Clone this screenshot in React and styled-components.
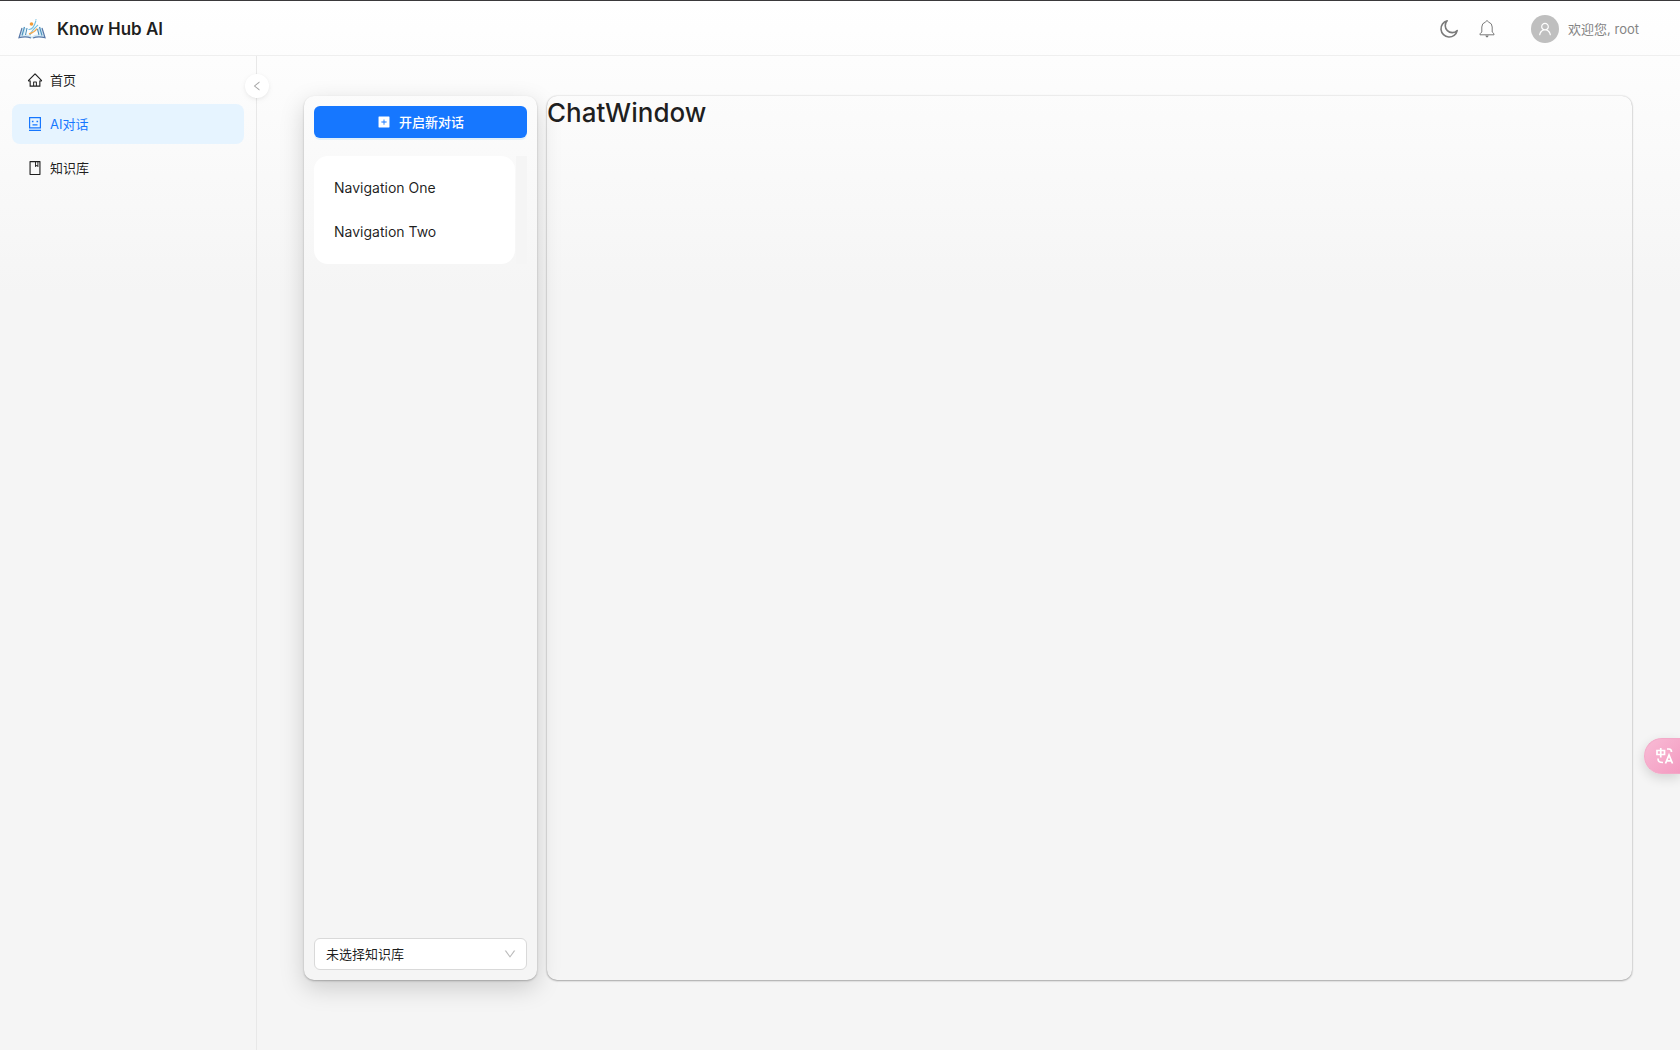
import React from "react";
import styled, { createGlobalStyle } from "styled-components";
import {
  AiOutlineHome,
  AiOutlineBook,
  AiOutlineUser,
  AiOutlineLeft,
  AiOutlineDown,
  AiFillPlusSquare,
} from "react-icons/ai";

const GlobalStyle = createGlobalStyle`
  *, *::before, *::after { box-sizing: border-box; }
  body {
    margin: 0;
    color: rgba(0, 0, 0, 0.88);
    font-family: Inter, "Noto Sans CJK SC", sans-serif;
    font-size: 13px;
    line-height: 22px;
  }
  button, select { font: inherit; color: inherit; }
`;

const Page = styled.div`
  display: flex;
  flex-direction: column;
  min-height: 100vh;
  background: linear-gradient(#ffffff, #f5f5f5 28%);
`;

const Header = styled.header`
  display: flex;
  align-items: center;
  justify-content: space-between;
  height: 56px;
  padding: 1px 41px 0 18px;
  border-top: 1px solid #3a393b;
  border-bottom: 1px solid #efefef;
`;

const Brand = styled.a`
  display: flex;
  align-items: center;
  gap: 11px;
  color: inherit;
  text-decoration: none;
`;

const BrandName = styled.h1`
  margin: 0;
  font-size: 17px;
  line-height: 32px;
  font-weight: 600;
`;

const Actions = styled.div`
  display: flex;
  align-items: center;
  gap: 18px;
`;

const IconButton = styled.button`
  display: flex;
  padding: 0;
  border: 0;
  background: none;
  color: #7a7a7a;
  cursor: pointer;
`;

const UserButton = styled(IconButton)`
  align-items: center;
  gap: 9px;
  margin-left: 16px;
  color: #848484;
`;

const Avatar = styled.span`
  display: flex;
  align-items: center;
  justify-content: center;
  width: 28px;
  height: 28px;
  border-radius: 50%;
  background: #bfbfbf;
  color: #ffffff;
`;

const Body = styled.div`
  display: flex;
  flex: 1;
`;

const Sider = styled.aside`
  position: relative;
  flex: 0 0 257px;
  padding: 4px 12px;
  border-right: 1px solid #e8e8e8;
`;

const Menu = styled.nav`
  display: flex;
  flex-direction: column;
  gap: 4px;
`;

const MenuLink = styled.a`
  display: flex;
  align-items: center;
  gap: 7px;
  height: 40px;
  padding: 0 15px;
  border-radius: 8px;
  background: ${(p) => (p.$active ? "#e6f4ff" : "transparent")};
  color: ${(p) => (p.$active ? "#1677ff" : "rgba(0, 0, 0, 0.88)")};
  text-decoration: none;
`;

const CollapseButton = styled.button`
  position: absolute;
  top: 18px;
  right: -13px;
  display: flex;
  align-items: center;
  justify-content: center;
  width: 24px;
  height: 24px;
  padding: 0;
  border: 0;
  border-radius: 50%;
  background: #ffffff;
  color: #a5a5a5;
  box-shadow: 0 2px 8px -2px rgba(0, 0, 0, 0.08), 0 1px 4px -1px rgba(25, 15, 15, 0.08);
  cursor: pointer;
`;

const Content = styled.main`
  display: flex;
  flex: 1;
  gap: 10px;
  padding: 40px 48px 70px 47px;
`;

const ChatSidebar = styled.section`
  display: flex;
  flex-direction: column;
  flex: 0 0 233px;
  padding: 10px;
  border-radius: 10px;
  box-shadow: 0 1px 2px rgba(0, 0, 0, 0.26), 0 8px 24px rgba(0, 0, 0, 0.17);
`;

const NewChatButton = styled.button`
  display: flex;
  align-items: center;
  justify-content: center;
  gap: 8px;
  height: 32px;
  padding: 0 16px;
  border: 0;
  border-radius: 6px;
  background: #1677ff;
  color: #ffffff;
  font-weight: 500;
  box-shadow: 0 2px 0 rgba(5, 145, 255, 0.1);
  cursor: pointer;
`;

const ChatListScroll = styled.div`
  margin-top: 18px;
  padding-right: 12px;
  background: linear-gradient(#f5f5f5, #f5f5f5) right / 11px 100% no-repeat;
`;

const ChatList = styled.ul`
  display: flex;
  flex-direction: column;
  gap: 4px;
  margin: 0;
  padding: 12px 4px;
  border-radius: 14px;
  background: #ffffff;
  font-size: 14px;
  list-style: none;
`;

const ChatLink = styled.a`
  display: block;
  padding: 0 16px;
  line-height: 40px;
  color: inherit;
  text-decoration: none;
`;

const SelectBox = styled.label`
  display: grid;
  align-items: center;
  margin-top: auto;
  color: #bcbcbc;

  > * {
    grid-area: 1 / 1;
  }

  > svg {
    justify-self: end;
    margin-right: 10px;
    pointer-events: none;
  }
`;

const Select = styled.select`
  width: 100%;
  height: 32px;
  padding: 0 32px 0 11px;
  border: 1px solid #d9d9d9;
  border-radius: 6px;
  background: #ffffff;
  color: rgba(0, 0, 0, 0.88);
  appearance: none;
`;

const ChatWindow = styled.section`
  flex: 1;
  border-radius: 10px;
  box-shadow: 0 1px 2px rgba(0, 0, 0, 0.28), 0 0 2px rgba(0, 0, 0, 0.2);
`;

const ChatTitle = styled.h2`
  margin: 0;
  font-size: 26px;
  line-height: 34px;
  font-weight: 500;
`;

const TranslateButton = styled.button`
  position: fixed;
  right: 0;
  top: 738px;
  display: flex;
  align-items: center;
  width: 36px;
  height: 36px;
  padding: 0 0 0 11px;
  border: 1px solid #f3a9c8;
  border-right: 0;
  border-radius: 18px 0 0 18px;
  background: linear-gradient(135deg, #f8bbd5, #f49bc1);
  color: #ffffff;
  box-shadow: 0 4px 12px rgba(0, 0, 0, 0.14);
  cursor: pointer;
`;

const Logo = () => (
  <svg width="28" height="22" viewBox="0 0 28 22" fill="none" aria-hidden="true">
    <path d="M5 9L1 20C6 18.500 10 19 14 20.500C18 19 22 18.500 27 20L23 9L20 10L22 17C18 16 16 17 14 18.500C12 17 10 16 6 17L8 10Z" fill="#d5eaf5" />
    <path d="M4 10L1 19.700C6 18.500 10 18.800 13 20M24 10L27 19.700C22 18.500 18 18.800 15 20" stroke="#5878a8" strokeWidth="1.200" />
    <path d="M6.500 9L4 17.500M9 10L7.500 17M21.500 9L24 17.500M19.500 11L21 17" stroke="#4c91bd" strokeWidth="1.100" />
    <path d="M10.500 11.500C14 12 16.500 8 18 2.500M12 17C14 12 18 9 20 7" stroke="#74c0e0" strokeWidth="1.100" />
    <path d="M11 16C14 15 17 14 19 10.500" stroke="#f2aa50" strokeWidth="1.500" />
    <circle cx="13.500" cy="6" r="1.800" fill="#f29c38" />
    <circle cx="18" cy="1.500" r="0.600" fill="#74c0e0" />
  </svg>
);

const MoonIcon = () => (
  <svg width="20" height="20" viewBox="0 0 20 20" fill="none" stroke="currentColor" strokeWidth="1.600" strokeLinejoin="round" aria-hidden="true">
    <path d="M8.200 1.800A8.200 8.200 0 1 0 18.200 11.500A6.800 6.800 0 0 1 8.200 1.800Z" />
  </svg>
);

const BellIcon = () => (
  <svg width="20" height="20" viewBox="0 0 20 20" fill="none" stroke="currentColor" strokeLinejoin="round" aria-hidden="true">
    <path d="M3 15.800V14.800L4.800 13V8A5.200 5.200 0 0 1 8.300 3.100L10 1.500L11.700 3.100A5.200 5.200 0 0 1 15.200 8V13L17 14.800V15.800Z" />
    <path d="M8.300 16.500H11.700L10.800 18.200H9.200Z" fill="currentColor" stroke="none" />
  </svg>
);

const FaceIcon = () => (
  <svg width="16" height="16" viewBox="0 0 16 16" fill="none" stroke="currentColor" strokeWidth="1.200" aria-hidden="true">
    <path d="M2.600 1.600H13.400V11.900H2.600ZM5.500 8.800H10.500M2 14.400H14" />
    <path d="M4.900 5.500H6.500M9.500 5.500H11.100" strokeWidth="1.500" />
  </svg>
);

const TranslateIcon = () => (
  <svg width="18" height="18" viewBox="0 0 18 18" fill="none" stroke="currentColor" strokeWidth="1.700" aria-hidden="true">
    <path d="M1 3.500H8.500V7.500H1ZM4.750 1V10.500" />
    <path d="M11 2H13C15 2 15.500 3 15.500 5M2 11.500C2 14.500 3 15.500 7 15.500" />
    <path d="M9.500 16.500L13 8L16.500 16.500M10.700 13.800H15.300" />
  </svg>
);

export default function App() {
  return (
    <>
      <GlobalStyle />
      <Page>
        <Header>
          <Brand href="#">
            <Logo />
            <BrandName>Know Hub AI</BrandName>
          </Brand>
          <Actions>
            <IconButton type="button" aria-label="切换主题">
              <MoonIcon />
            </IconButton>
            <IconButton type="button" aria-label="通知">
              <BellIcon />
            </IconButton>
            <UserButton type="button">
              <Avatar>
                <AiOutlineUser size={16} />
              </Avatar>
              欢迎您, root
            </UserButton>
          </Actions>
        </Header>
        <Body>
          <Sider>
            <Menu>
              <MenuLink href="#home">
                <AiOutlineHome size={16} />
                首页
              </MenuLink>
              <MenuLink href="#chat" $active aria-current="page">
                <FaceIcon />
                AI对话
              </MenuLink>
              <MenuLink href="#knowledge">
                <AiOutlineBook size={16} />
                知识库
              </MenuLink>
            </Menu>
            <CollapseButton type="button" aria-label="收起菜单">
              <AiOutlineLeft size={12} />
            </CollapseButton>
          </Sider>
          <Content>
            <ChatSidebar>
              <NewChatButton type="button">
                <AiFillPlusSquare size={14} />
                开启新对话
              </NewChatButton>
              <ChatListScroll>
                <ChatList>
                  <li>
                    <ChatLink href="#one">Navigation One</ChatLink>
                  </li>
                  <li>
                    <ChatLink href="#two">Navigation Two</ChatLink>
                  </li>
                </ChatList>
              </ChatListScroll>
              <SelectBox>
                <Select aria-label="知识库" defaultValue="none">
                  <option value="none">未选择知识库</option>
                </Select>
                <AiOutlineDown size={14} />
              </SelectBox>
            </ChatSidebar>
            <ChatWindow>
              <ChatTitle>ChatWindow</ChatTitle>
            </ChatWindow>
          </Content>
        </Body>
        <TranslateButton type="button" aria-label="翻译">
          <TranslateIcon />
        </TranslateButton>
      </Page>
    </>
  );
}
